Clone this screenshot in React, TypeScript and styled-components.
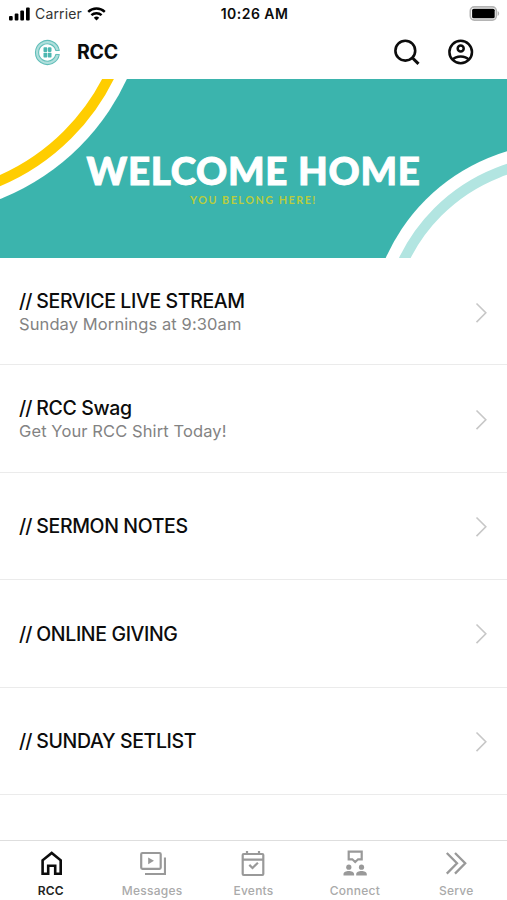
import React from "react";
import styled, { createGlobalStyle } from "styled-components";

const GlobalStyle = createGlobalStyle`
  *, *::before, *::after { box-sizing: border-box; }
  body { margin: 0; background: #fff; font-family: Inter, "Liberation Sans", sans-serif; color: #0c0c0c; }
`;

const Screen = styled.div`
  display: flex;
  flex-direction: column;
  width: 507px;
  height: 900px;
  overflow: hidden;
  background: #fff;
`;

const StatusBar = styled.div`
  display: grid;
  grid-template-columns: 1fr auto 1fr;
  align-items: center;
  height: 27px;
  padding: 0 7px 0 9px;
  flex: none;
`;

const Carrier = styled.div`
  display: flex;
  align-items: center;
  gap: 5px;
  font-size: 14px;
  line-height: 20px;
  letter-spacing: 0.15px;
  color: #333;
`;

const Clock = styled.div`
  font-size: 14px;
  line-height: 20px;
  font-weight: 600;
  letter-spacing: 0.45px;
`;

const Battery = styled.svg`
  justify-self: end;
`;

const AppBar = styled.header`
  display: flex;
  align-items: center;
  height: 52px;
  flex: none;
  padding: 0 32px 2px 34px;
`;

const AppName = styled.h1`
  flex: 1;
  margin: 0 0 0 16px;
  font-size: 19.5px;
  line-height: 24px;
  font-weight: 700;
  letter-spacing: -0.2px;
`;

const Actions = styled.div`
  display: flex;
  gap: 26px;
`;

const Banner = styled.section`
  position: relative;
  height: 178.5px;
  flex: none;
  background: #3bb4ad;
  overflow: hidden;
  text-align: center;
`;

const BannerArt = styled.svg`
  position: absolute;
  inset: 0;
`;

const BannerText = styled.div`
  position: relative;
  padding-top: 67px;
  white-space: nowrap;
  font-family: Lato, "Liberation Sans", sans-serif;
`;

const Headline = styled.div`
  font-size: 38.5px;
  line-height: 48px;
  font-weight: 900;
  letter-spacing: 0.7px;
  color: #fff;
  -webkit-text-stroke: 0.9px #fff;
`;

const Tagline = styled.div`
  font-size: 10.8px;
  line-height: 12px;
  font-weight: 700;
  letter-spacing: 1.5px;
  color: #b9cd3d;
`;

const List = styled.main`
  flex: 1;
  min-height: 0;
`;

const Row = styled.div<{ $tall: boolean }>`
  display: flex;
  align-items: center;
  justify-content: space-between;
  height: 107.5px;
  padding: ${(p) => (p.$tall ? 2.5 : 1)}px 19px 0;
  border-bottom: 1px solid #ebebeb;
`;

const RowTitle = styled.div`
  font-size: 19.5px;
  line-height: 24px;
  font-weight: 500;
  letter-spacing: -0.37px;
`;

const Slashes = styled.span`
  letter-spacing: -1px;
`;

const RowSubtitle = styled.div`
  font-size: 16.5px;
  line-height: 23px;
  letter-spacing: 0.1px;
  color: #838383;
`;

const TabBar = styled.nav`
  display: grid;
  grid-template-columns: repeat(5, 1fr);
  height: 60px;
  flex: none;
  border-top: 1px solid #dedede;
`;

const Tab = styled.div<{ $active?: boolean }>`
  display: flex;
  flex-direction: column;
  align-items: center;
  padding-top: 8px;
  gap: 6px;
  color: ${(p) => (p.$active ? "#0c0c0c" : "#999")};
`;

const TabLabel = styled.span<{ $active?: boolean }>`
  font-size: 12px;
  line-height: 16px;
  font-weight: ${(p) => (p.$active ? 600 : 500)};
  letter-spacing: ${(p) => (p.$active ? 0.15 : 0.25)}px;
  color: ${(p) => (p.$active ? "#222" : "#aaa")};
`;

const Icon = styled.svg`
  display: block;
  flex: none;
  fill: none;
  stroke: currentColor;
`;

const rows = [
  { title: "SERVICE LIVE STREAM", subtitle: "Sunday Mornings at 9:30am" },
  { title: "RCC Swag", subtitle: "Get Your RCC Shirt Today!" },
  { title: "SERMON NOTES" },
  { title: "ONLINE GIVING" },
  { title: "SUNDAY SETLIST" },
];

const tabs = [
  {
    label: "RCC",
    art: <path d="M5.600 24.700V11.300L14.700 3.900l9 7.400v13.400h-5.500v-8h-7v8z" strokeWidth="2.600" />,
  },
  {
    label: "Messages",
    art: (
      <>
        <rect x="3.200" y="4" width="19.500" height="15.800" rx="1.200" strokeWidth="2.200" />
        <path d="M27 8.500v16.500H7" strokeWidth="2.200" />
        <path d="M10.200 8.400v6.800l5.800-3.400z" fill="currentColor" stroke="none" />
      </>
    ),
  },
  {
    label: "Events",
    art: (
      <>
        <rect x="3.700" y="5" width="20.600" height="21" rx="1" strokeWidth="2.200" />
        <path d="M8 2v3M20 2v3M4 10.700h20" strokeWidth="2.200" />
        <path d="M10.300 15.900l3.200 3.100 5.400-5.300" strokeWidth="2.200" />
      </>
    ),
  },
  {
    label: "Connect",
    art: (
      <>
        <path d="M7.700 2.700h13V10.300h-3.600L14.200 13 11.300 10.300H7.700z" strokeWidth="2.200" />
        <g fill="currentColor" stroke="none">
          <circle cx="7.800" cy="18.200" r="2.600" />
          <circle cx="20.500" cy="18.200" r="2.600" />
          <path d="M2.500 26.600v-1.500c0-4.300 10.600-4.300 10.600 0v1.500zM15.200 26.600v-1.500c0-4.300 10.600-4.300 10.600 0v1.500z" />
        </g>
      </>
    ),
  },
  {
    label: "Serve",
    art: <path d="M4.800 4l10.200 10.300L4.800 24.600M13 4l10.200 10.300L13 24.600" strokeWidth="2.300" />,
  },
];

const SignalIcon = () => (
  <svg width="21" height="14" viewBox="0 0 21 14">
    <rect x="0" y="9" width="3.700" height="4.500" rx="1" />
    <rect x="5.700" y="6.500" width="3.700" height="7" rx="1" />
    <rect x="11.300" y="3.500" width="3.700" height="10" rx="1" />
    <rect x="17" y="0.500" width="3.700" height="13" rx="1" />
  </svg>
);

const WifiIcon = () => (
  <svg width="19" height="14" viewBox="0 0 19 14" fill="none" stroke="#000" strokeWidth="2.400">
    <path d="M1.200 4.800a12 12 0 0 1 16.600 0M4.400 8.200a7.500 7.500 0 0 1 10.200 0" />
    <path d="M9.500 13.400l-2.700-2.700a4 4 0 0 1 5.400 0z" fill="#000" stroke="none" />
  </svg>
);

const LogoIcon = () => (
  <svg width="27" height="27" viewBox="0 0 27 27" fill="none" stroke="#62bfba">
    <path d="M25.300 11.500a12 12 0 1 0 0 4" strokeWidth="1.100" />
    <path d="M21.800 11.500a8.700 8.700 0 1 0 0 4" strokeWidth="1.100" />
    <path d="M23.800 12a10.400 10.400 0 1 0 0 3" strokeWidth="2.800" opacity=".5" />
    <path d="M21.500 11.500h4M21.500 15.500h4" strokeWidth="1" />
    <g fill="#4db7b1" stroke="none">
      <rect x="9.500" y="8.300" width="3.700" height="4.600" rx=".7" />
      <rect x="13.800" y="8.300" width="3.700" height="4.600" rx="1.200" />
      <rect x="9.500" y="13.800" width="3.700" height="4.600" rx=".7" />
      <rect x="13.800" y="13.800" width="3.700" height="4.600" rx=".7" />
    </g>
  </svg>
);

export default function App() {
  return (
    <Screen>
      <GlobalStyle />
      <StatusBar>
        <Carrier>
          <SignalIcon />
          <span>Carrier</span>
          <WifiIcon />
        </Carrier>
        <Clock>10:26 AM</Clock>
        <Battery width="31" height="15" viewBox="0 0 31 15">
          <rect x="1.300" y="0.900" width="26" height="13.200" rx="4" fill="#fff" stroke="#b4b4b4" strokeWidth="1.600" />
          <rect x="3.100" y="2.800" width="22.600" height="9.500" rx="1.500" />
          <path d="M28.700 5c2 1 2 4 0 5z" fill="#b4b4b4" />
        </Battery>
      </StatusBar>
      <AppBar>
        <LogoIcon />
        <AppName>RCC</AppName>
        <Actions>
          <Icon width="28" height="28" viewBox="0 0 28 28" strokeWidth="2.600">
            <circle cx="12.300" cy="12.700" r="9.900" />
            <path d="M19.300 19.700l6.200 6.200" strokeWidth="3" />
          </Icon>
          <Icon width="28" height="28" viewBox="0 0 28 28" strokeWidth="2.500">
            <circle cx="13.700" cy="14" r="11.300" />
            <circle cx="13.700" cy="10.600" r="3" />
            <path d="M5.700 21.700c3.500-4.300 12.500-4.300 16 0" />
          </Icon>
        </Actions>
      </AppBar>
      <Banner>
        <BannerArt width="507" height="179" viewBox="0 79 507 179">
          <circle cx="-87" cy="-20" r="235.700" fill="#fff" />
          <circle cx="-87" cy="-20" r="218.700" fill="none" stroke="#ffcd00" strokeWidth="10.500" />
          <circle cx="562" cy="336" r="192.800" fill="#fff" />
          <circle cx="562" cy="336" r="175.500" fill="none" stroke="#b2e5e1" strokeWidth="10.500" />
        </BannerArt>
        <BannerText>
          <Headline>WELCOME HOME</Headline>
          <Tagline>YOU BELONG HERE!</Tagline>
        </BannerText>
      </Banner>
      <List>
        {rows.map((row) => (
          <Row key={row.title} $tall={Boolean(row.subtitle)}>
            <div>
              <RowTitle>
                <Slashes>{"//"}</Slashes> {row.title}
              </RowTitle>
              {row.subtitle && <RowSubtitle>{row.subtitle}</RowSubtitle>}
            </div>
            <Icon width="13" height="21" viewBox="0 0 13 21" color="#c7c7c7" strokeWidth="1.600">
              <path d="M1.500 1.500l9.300 9.300-9.300 9.300" />
            </Icon>
          </Row>
        ))}
      </List>
      <TabBar>
        {tabs.map((tab, i) => (
          <Tab key={tab.label} $active={i === 0}>
            <Icon width="28" height="28" viewBox="0 0 28 28">{tab.art}</Icon>
            <TabLabel $active={i === 0}>{tab.label}</TabLabel>
          </Tab>
        ))}
      </TabBar>
    </Screen>
  );
}
